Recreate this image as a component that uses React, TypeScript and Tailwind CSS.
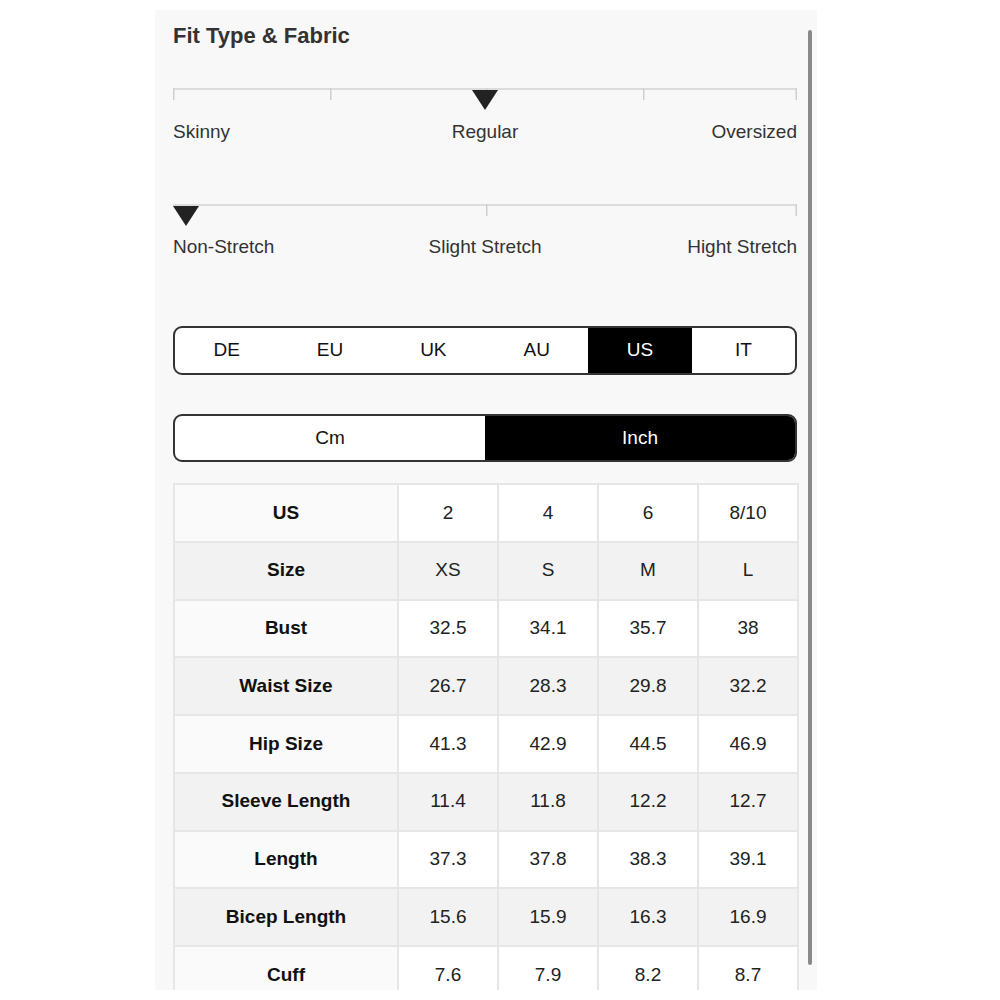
import React from "react";

const font = { fontFamily: '"Liberation Sans", Arial, sans-serif' };

const rows: { label: string; values: string[] }[] = [
	{ label: "US", values: ["2", "4", "6", "8/10"] },
	{ label: "Size", values: ["XS", "S", "M", "L"] },
	{ label: "Bust", values: ["32.5", "34.1", "35.7", "38"] },
	{ label: "Waist Size", values: ["26.7", "28.3", "29.8", "32.2"] },
	{ label: "Hip Size", values: ["41.3", "42.9", "44.5", "46.9"] },
	{ label: "Sleeve Length", values: ["11.4", "11.8", "12.2", "12.7"] },
	{ label: "Length", values: ["37.3", "37.8", "38.3", "39.1"] },
	{ label: "Bicep Length", values: ["15.6", "15.9", "16.3", "16.9"] },
	{ label: "Cuff", values: ["7.6", "7.9", "8.2", "8.7"] },
];

const regions = ["DE", "EU", "UK", "AU", "US", "IT"];

// 슬라이더 트랙 (눈금 + 삼각형 표시)
function Track({ ticks, marker }: { ticks: number[]; marker: number }) {
	return (
		<svg width="624" height="24" className="block">
			<rect x="0" y="0" width="624" height="2" fill="#dcdcdc" />
			{ticks.map((t) => (
				<rect key={t} x={Math.min(t, 622.5)} y="0" width="1.5" height="12" fill="#cfcfcf" />
			))}
			<polygon points={`${marker - 13},2 ${marker + 13},2 ${marker},22`} fill="#222" />
		</svg>
	);
}

export default function App() {
	return (
		<div className="w-[1000px] h-[1000px] bg-white pt-[10px]" style={font}>
			<div className="relative ml-[155px] w-[662px] h-[980px] overflow-hidden bg-[#f8f8f8] pl-[18px] pr-[20px] pt-[13px]">
				{/* 스크롤바 */}
				<div className="absolute left-[653px] top-[20px] w-[4px] h-[935px] rounded-full bg-[#8a8a8a]"></div>

				<h2 className="text-[22px] leading-[26px] font-bold text-[#333]">Fit Type &amp; Fabric</h2>

				{/* Fit */}
				<div className="mt-[39px]">
					<Track ticks={[0, 157, 313, 470, 624]} marker={312} />
				</div>
				<div className="mt-[8px] grid grid-cols-3 text-[19px] leading-[24px] text-[#333]">
					<span className="text-left">Skinny</span>
					<span className="text-center">Regular</span>
					<span className="text-right">Oversized</span>
				</div>

				{/* Fabric */}
				<div className="mt-[60px]">
					<Track ticks={[313, 624]} marker={13} />
				</div>
				<div className="mt-[7px] grid grid-cols-3 text-[19px] leading-[24px] text-[#333]">
					<span className="text-left">Non-Stretch</span>
					<span className="text-center">Slight Stretch</span>
					<span className="text-right">Hight Stretch</span>
				</div>

				{/* 지역 탭 */}
				<div className="mt-[67px] h-[49px] grid grid-cols-6 border-2 border-[#333] rounded-[9px] overflow-hidden bg-white">
					{regions.map((r) => (
						<div
							key={r}
							className={`flex items-center justify-center text-[19px] ${
								r === "US" ? "bg-black text-white" : "text-[#111]"
							}`}>
							{r}
						</div>
					))}
				</div>

				{/* 단위 */}
				<div className="mt-[39px] h-[48px] grid grid-cols-2 border-2 border-[#333] rounded-[9px] overflow-hidden bg-white">
					<div className="flex items-center justify-center text-[19px] text-[#111]">Cm</div>
					<div className="flex items-center justify-center text-[19px] bg-black text-white">Inch</div>
				</div>

				{/* 사이즈 표 */}
				<table className="mt-[21px] w-[624px] table-fixed border-collapse text-[19px]">
					<colgroup>
						<col className="w-[224px]" />
						<col className="w-[100px]" />
						<col className="w-[100px]" />
						<col className="w-[100px]" />
						<col className="w-[100px]" />
					</colgroup>
					<tbody>
						{rows.map((row, i) => (
							<tr key={row.label} className={i % 2 === 1 ? "bg-[#f2f2f2]" : "bg-white"}>
								<td
									className={`h-[57.75px] border-2 border-[#e6e6e6] text-center font-bold text-[#111] ${
										i % 2 === 1 ? "" : "bg-[#fafafa]"
									}`}>
									{row.label}
								</td>
								{row.values.map((v, j) => (
									<td key={j} className="h-[57.75px] border-2 border-[#e6e6e6] text-center text-[#222]">
										{v}
									</td>
								))}
							</tr>
						))}
					</tbody>
				</table>
			</div>
		</div>
	);
}
